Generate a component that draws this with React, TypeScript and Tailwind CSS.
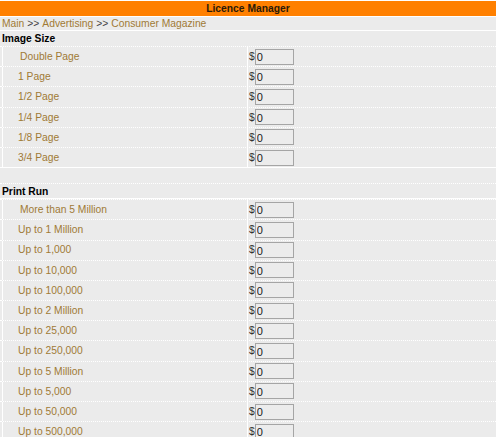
import React from 'react'

interface PriceRow {
  label: string
  value: string
}

const imageSizes: PriceRow[] = [
  { label: 'Double Page', value: '0' },
  { label: '1 Page', value: '0' },
  { label: '1/2 Page', value: '0' },
  { label: '1/4 Page', value: '0' },
  { label: '1/8 Page', value: '0' },
  { label: '3/4 Page', value: '0' },
]

const printRuns: PriceRow[] = [
  { label: 'More than 5 Million', value: '0' },
  { label: 'Up to 1 Million', value: '0' },
  { label: 'Up to 1,000', value: '0' },
  { label: 'Up to 10,000', value: '0' },
  { label: 'Up to 100,000', value: '0' },
  { label: 'Up to 2 Million', value: '0' },
  { label: 'Up to 25,000', value: '0' },
  { label: 'Up to 250,000', value: '0' },
  { label: 'Up to 5 Million', value: '0' },
  { label: 'Up to 5,000', value: '0' },
  { label: 'Up to 50,000', value: '0' },
  { label: 'Up to 500,000', value: '0' },
]

function PriceLine({ row, first }: { row: PriceRow; first: boolean }) {
  return (
    <div className="flex h-[20.2px] border-t border-dotted border-white pl-[2px]">
      <div
        className={
          first
            ? 'flex w-[245px] items-center border-l border-white pt-[1px] pl-[17px] text-[#a07a35]'
            : 'flex w-[245px] items-center border-l border-white pt-[1px] pl-[15px] text-[#a07a35]'
        }
      >
        {row.label}
      </div>
      <div className="flex flex-1 items-center border-l border-white pl-[1px]">
        <span className="pt-[1px] text-[#333]">$</span>
        <input
          type="text"
          defaultValue={row.value}
          className="h-[16px] w-[39px] border border-[#a5a5a5] bg-[#ececec] px-[1px] pt-[1px] text-[11px] leading-none text-[#1a1a1a] outline-none"
        />
      </div>
    </div>
  )
}

export default function App() {
  return (
    <div className="w-[496px] bg-white pt-[1px] text-[10.3px] leading-none" style={{ fontFamily: '"Liberation Sans", Arial, sans-serif' }}>
      <div className="flex h-[15px] items-center justify-center bg-[#ff8000] pt-[1px] font-bold text-[#2b1a08]">
        Licence Manager
      </div>

      <div className="mt-[1px] bg-[#ebebeb]">
        <div className="flex h-[14px] items-center border-b border-white pt-[2px] pl-[2px] text-[#a07a35]">
          Main <span className="mx-[3px] text-[#444]">&gt;&gt;</span> Advertising{' '}
          <span className="mx-[3px] text-[#444]">&gt;&gt;</span> Consumer Magazine
        </div>

        {/* Image size section */}
        <div className="flex h-[15px] items-center pt-[2px] pl-[2px] font-bold text-black">Image Size</div>
        {imageSizes.map((row, i) => (
          <PriceLine key={row.label} row={row} first={i === 0} />
        ))}

        <div className="h-[16px] border-t border-white" />

        {/* Print run section */}
        <div className="flex h-[15px] items-center border-t border-dotted border-white pt-[2px] pl-[2px] font-bold text-black">
          Print Run
        </div>
        <div className="border-t border-white">
          {printRuns.map((row, i) => (
            <PriceLine key={row.label} row={row} first={i === 0} />
          ))}
        </div>
      </div>
    </div>
  )
}
